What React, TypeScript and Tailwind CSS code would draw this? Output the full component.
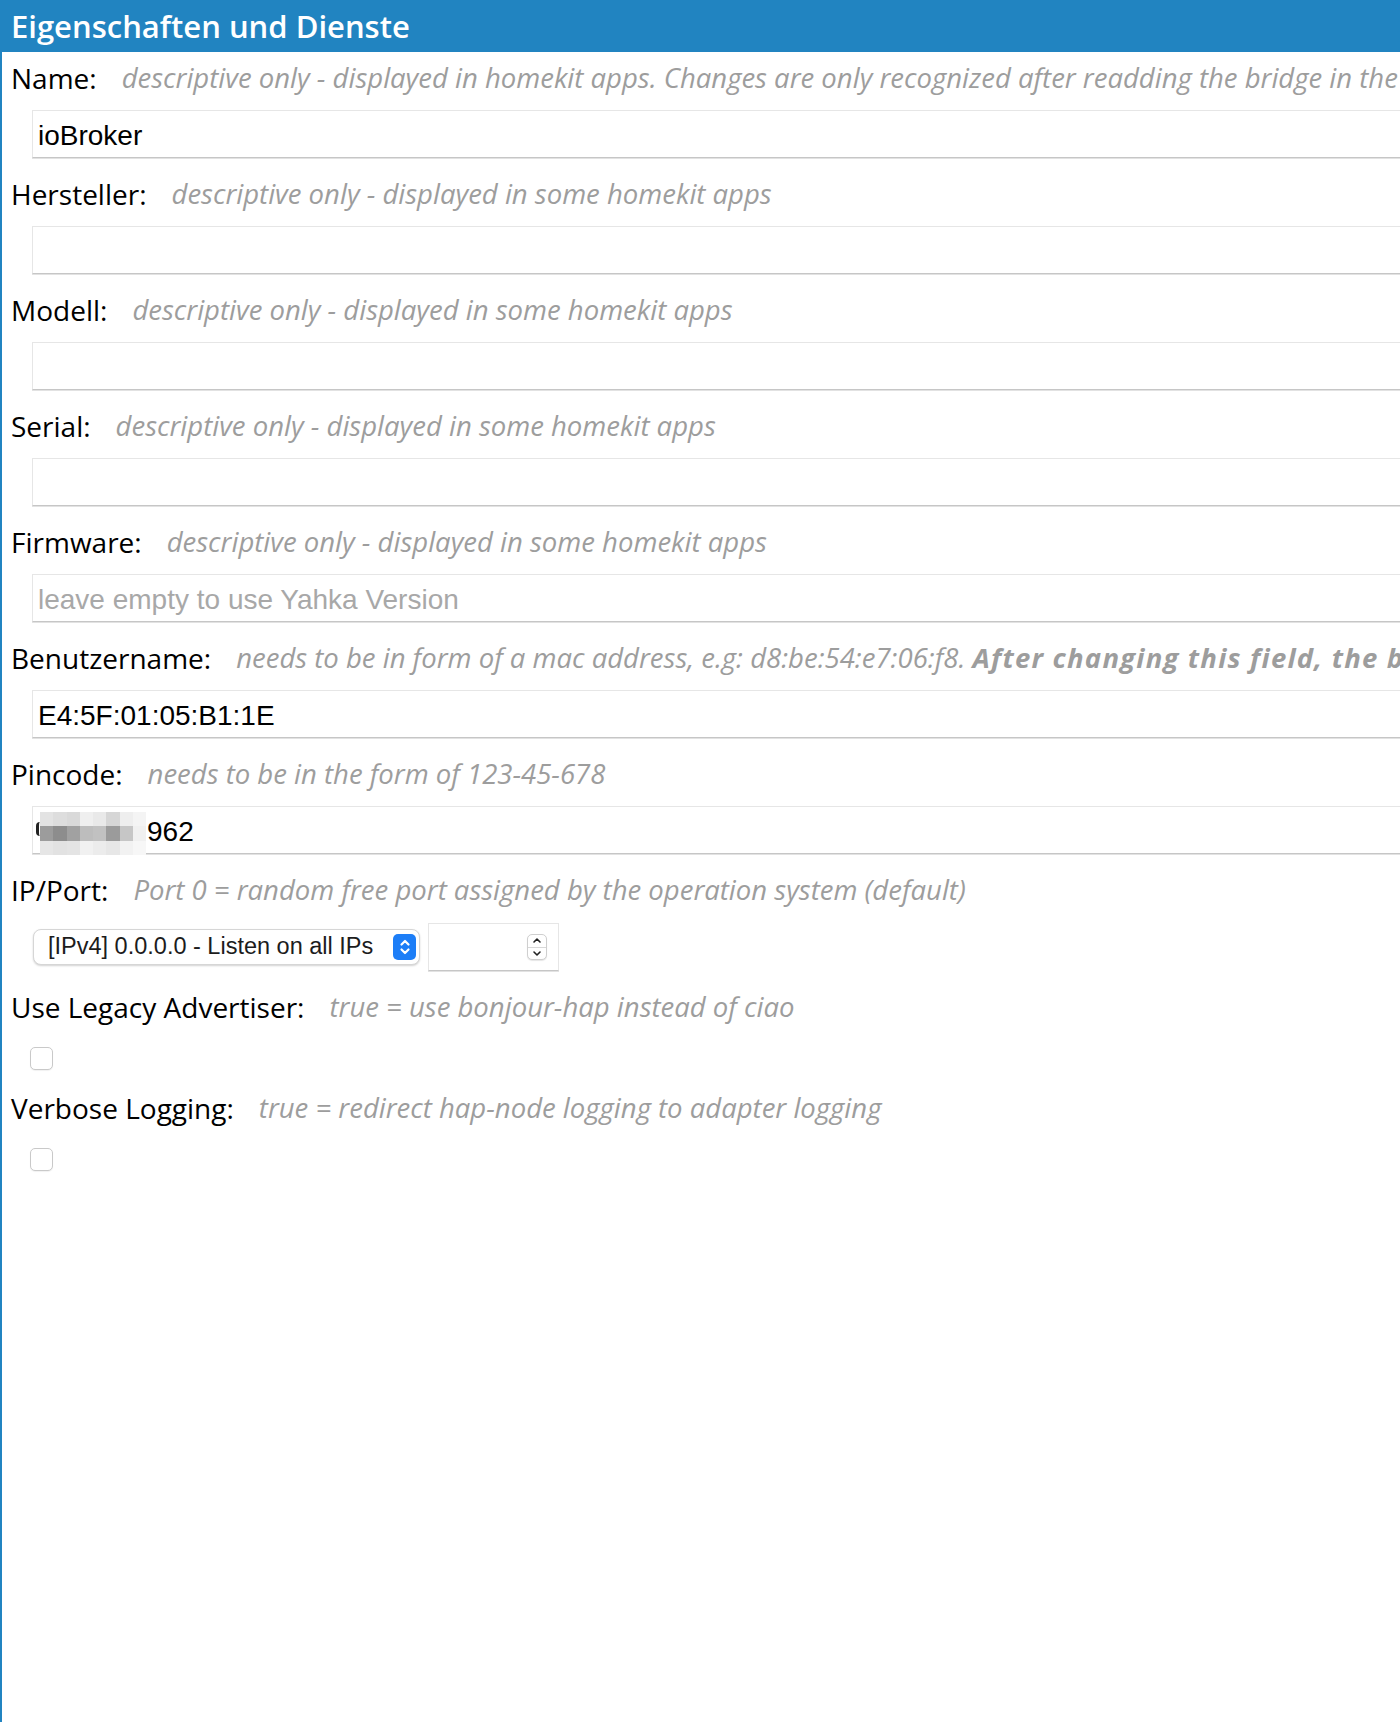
import React from "react";

const blue = "#2184c1";

function Label({ label, children }: { label: string; children?: React.ReactNode }) {
  return (
    <div className="flex h-[40px] items-center whitespace-nowrap pl-[9px]">
      <span className="text-[28px] leading-[40px] text-black">{label}</span>
      <span className="ml-[25px] text-[27.5px] italic leading-[40px] text-[#9d9d9d]">{children}</span>
    </div>
  );
}

function Field({ value, placeholder }: { value?: string; placeholder?: string }) {
  return (
    <div className="mb-[16px] mt-[12px] pl-[30px]">
      <input
        readOnly
        defaultValue={value}
        placeholder={placeholder}
        className="h-[48px] w-[1420px] border border-[#e6e6e6] border-b-[#c6c6c6] bg-white px-[5px] pt-[4px] font-['Liberation_Sans',Arial,sans-serif] text-[28px] text-black shadow-[0_1px_0_#e2e2e2] outline-none placeholder:text-[#a8a8a8]"
      />
    </div>
  );
}

function Check() {
  return (
    <div className="mb-[18px] mt-[20px] pl-[28px]">
      <div className="h-[23px] w-[23px] rounded-[5px] border border-[#c9c9c9] bg-white shadow-[0_1px_1px_rgba(0,0,0,0.06)]" />
    </div>
  );
}

const mosaic = [
  ["#e3e3e3", "#dddddd", "#d9d9d9", "#efefef", "#e9e9e9", "#d6d6d6", "#eeeeee", "#f4f4f4"],
  ["#9c9c9c", "#8d8d8d", "#a1a1a1", "#bdbdbd", "#c1c1c1", "#9b9b9b", "#c6c6c6", "#f0f0f0"],
  ["#e6e6e6", "#e2e2e2", "#e4e4e4", "#f1f1f1", "#ececec", "#e7e7e7", "#f2f2f2", "#f7f7f7"],
];

function PinField() {
  return (
    <div className="mb-[16px] mt-[12px] pl-[30px]">
      <div className="relative flex h-[48px] w-[1420px] items-center border border-[#e6e6e6] border-b-[#c6c6c6] bg-white pl-[114px] pt-[4px] font-['Liberation_Sans',Arial,sans-serif] text-[28px] text-black shadow-[0_1px_0_#e2e2e2]">
        962
        <div className="absolute left-[3px] top-[15px] h-[14px] w-[4px] rounded-l-full border-l-[3px] border-[#222]" />
        <div className="absolute left-[7px] top-[5px] grid h-[43px] w-[106px] grid-cols-8 grid-rows-3">
          {mosaic.flat().map((c, i) => (
            <div key={i} style={{ background: c }} />
          ))}
        </div>
      </div>
    </div>
  );
}

function IpPort() {
  return (
    <div className="mb-[16px] mt-[13px] flex h-[48px] items-center pl-[31px]">
      <div className="flex h-[36px] w-[387px] items-center justify-between rounded-[8px] border border-[#d6d6d6] bg-white pl-[14px] pr-[3px] font-['Liberation_Sans',Arial,sans-serif] text-[23.5px] text-[#1c1c1c] shadow-[0_1px_2px_rgba(0,0,0,0.18)]">
        <span>[IPv4] 0.0.0.0 - Listen on all IPs</span>
        <div className="flex h-[26px] w-[23px] items-center justify-center rounded-[5px] bg-[#1d7ef7]">
          <svg width="12" height="18" viewBox="0 0 12 18" fill="none" stroke="white" strokeWidth="2.2" strokeLinecap="round" strokeLinejoin="round">
            <path d="M2.5 6.5 6 3l3.5 3.5" />
            <path d="M2.5 11.5 6 15l3.5-3.5" />
          </svg>
        </div>
      </div>
      <div className="ml-[8px] flex h-[48px] w-[131px] items-center justify-end border border-[#e6e6e6] border-b-[#c6c6c6] bg-white pr-[11px] shadow-[0_1px_0_#e2e2e2]">
        <div className="flex h-[26px] w-[20px] flex-col overflow-hidden rounded-[5px] border border-[#cfcfcf] bg-white shadow-[0_1px_1px_rgba(0,0,0,0.1)]">
          <div className="flex flex-1 items-center justify-center border-b border-[#d8d8d8]">
            <svg width="10" height="7" viewBox="0 0 10 7" fill="none" stroke="#222" strokeWidth="1.6" strokeLinecap="round" strokeLinejoin="round">
              <path d="M2 5 5 2l3 3" />
            </svg>
          </div>
          <div className="flex flex-1 items-center justify-center">
            <svg width="10" height="7" viewBox="0 0 10 7" fill="none" stroke="#222" strokeWidth="1.6" strokeLinecap="round" strokeLinejoin="round">
              <path d="M2 2l3 3 3-3" />
            </svg>
          </div>
        </div>
      </div>
    </div>
  );
}

export default function App() {
  const some = "descriptive only - displayed in some homekit apps";
  return (
    <div className="min-h-[1722px] w-full overflow-hidden border-l-2 border-[#2184c1] bg-white font-['Open_Sans','Noto_Sans',sans-serif]">
      <div className="flex h-[52px] items-center pl-[9px] text-[31px] font-semibold text-white" style={{ background: blue }}>
        Eigenschaften und Dienste
      </div>
      <div className="pt-[6px]">
        <Label label="Name:">
          descriptive only - displayed in homekit apps. Changes are only recognized after readding the bridge in the Home app
        </Label>
        <Field value="ioBroker" />

        <Label label="Hersteller:">{some}</Label>
        <Field />

        <Label label="Modell:">{some}</Label>
        <Field />

        <Label label="Serial:">{some}</Label>
        <Field />

        <Label label="Firmware:">{some}</Label>
        <Field placeholder="leave empty to use Yahka Version" />

        <Label label="Benutzername:">
          needs to be in form of a mac address, e.g: d8:be:54:e7:06:f8.{" "}
          <b className="font-bold tracking-[1.2px]">After changing this field, the bridge has to be added again</b>
        </Label>
        <Field value="E4:5F:01:05:B1:1E" />

        <Label label="Pincode:">needs to be in the form of 123-45-678</Label>
        <PinField />

        <Label label="IP/Port:">Port 0 = random free port assigned by the operation system (default)</Label>
        <IpPort />

        <Label label="Use Legacy Advertiser:">true = use bonjour-hap instead of ciao</Label>
        <Check />

        <Label label="Verbose Logging:">true = redirect hap-node logging to adapter logging</Label>
        <Check />
      </div>
    </div>
  );
}
